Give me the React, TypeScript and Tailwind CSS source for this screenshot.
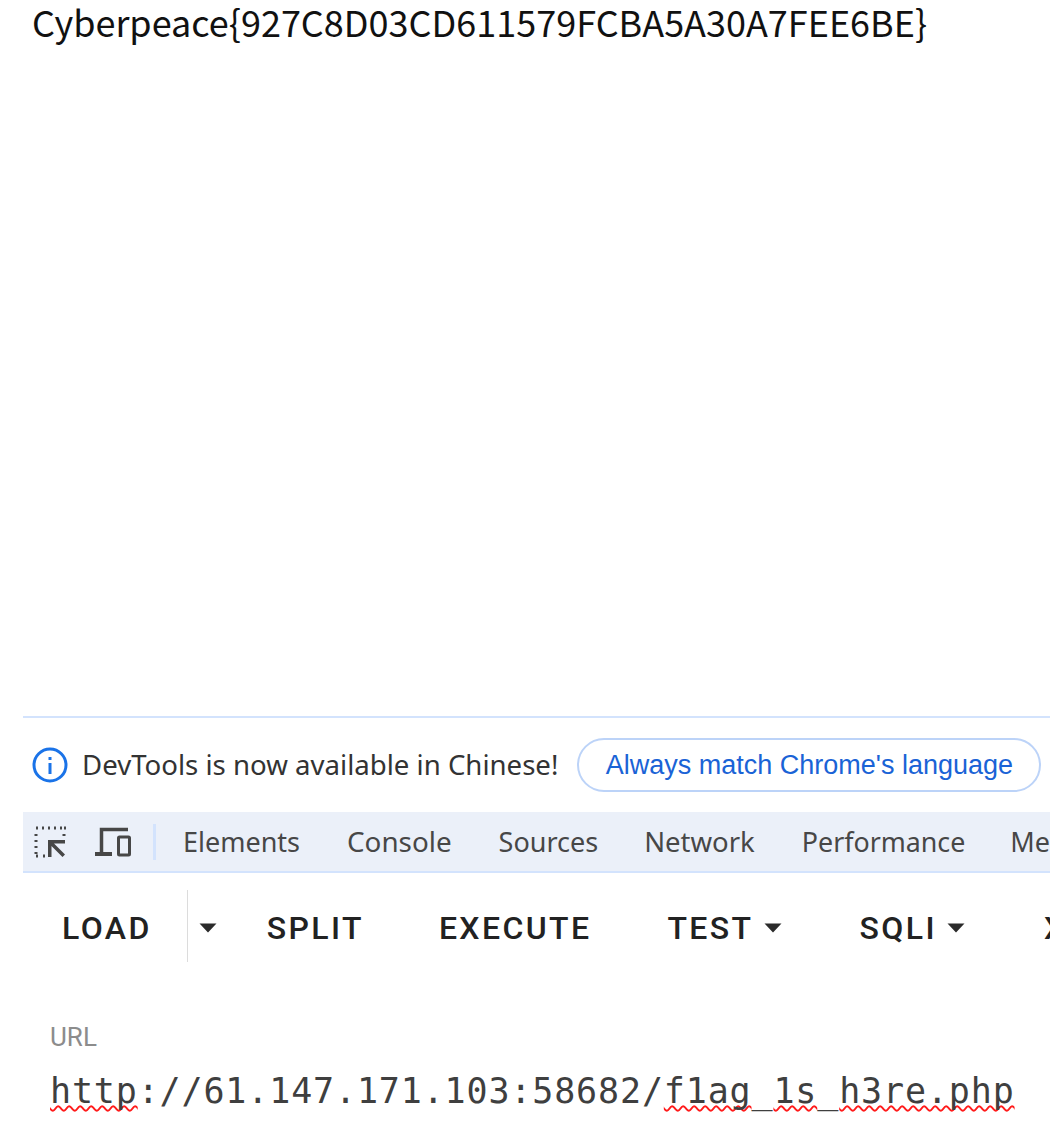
import React from 'react';

const panelTabs = [
  { label: 'Elements', cls: 'text-[27px]' },
  { label: 'Console', cls: 'text-[27.800px]' },
  { label: 'Sources', cls: 'text-[27px]' },
  { label: 'Network', cls: 'text-[27.500px] -ml-px' },
  { label: 'Performance', cls: 'text-[26.800px]' },
  { label: 'Memory', cls: 'text-[27px] -ml-[2px]' },
];

const Caret = () => (
  <svg width="18" height="10" viewBox="0 0 18 10" className="shrink-0">
    <path d="M0.5 0.5 L17.5 0.5 L9 9.5 Z" fill="#2b2b2b" />
  </svg>
);

const Squiggle = ({ children }: { children: React.ReactNode }) => (
  <span className="underline decoration-wavy decoration-[#ff1a1a] decoration-2 underline-offset-[2px] [text-decoration-skip-ink:none]">{children}</span>
);

export default function App() {
  return (
    <div className="w-[1050px] h-[1125px] overflow-hidden bg-white flex flex-col">
      <div className="h-[716px] pl-[32px] shrink-0">
        <p className="text-[36px] leading-[42px] text-[#111] whitespace-nowrap font-['Noto_Sans_CJK_SC','Noto_Sans',sans-serif]">
          Cyberpeace{'{'}927C8D03CD611579FCBA5A30A7FEE6BE{'}'}
        </p>
      </div>

      <div className="ml-[23px] flex flex-col">
        <div className="h-[96px] border-t-2 border-[#d3e3fd] flex items-center pl-[9px] gap-[19px]">
          <div className="flex items-center gap-[14px]">
            <svg width="36" height="36" viewBox="0 0 36 36" className="shrink-0">
              <circle cx="18" cy="18" r="16" fill="none" stroke="#1a73e8" strokeWidth="3" />
              <rect x="16.500" y="16" width="3" height="11" fill="#1a73e8" />
              <rect x="16.500" y="10" width="3" height="3" fill="#1a73e8" />
            </svg>
            <span className="text-[27.600px] text-[#333] whitespace-nowrap font-['Noto_Sans',sans-serif]">DevTools is now available in Chinese!</span>
          </div>
          <button className="h-[54px] w-[464px] shrink-0 rounded-full border-2 border-[#bcd3f8] text-[27px] text-[#1a63d6] font-['Liberation_Sans',sans-serif] whitespace-nowrap">
            Always match Chrome's language
          </button>
        </div>

        <div className="h-[61px] bg-[#ebf0f9] border-b-2 border-[#d3e3fd] flex items-center overflow-hidden pl-[11px]">
          <svg width="34" height="34" viewBox="0 0 34 34" className="shrink-0">
            <path d="M2 3h2M8 3h2M14 3h2M20 3h2M26 3h2M30 3h2M2 9v2M2 15v2M2 21v2M2 27v2M2 31h2M9 31h2M30 9v2" fill="none" stroke="#474747" strokeWidth="3" />
            <path d="M14 32V15h17v3.500H20L31 29.500l-2.500 2.500L17.500 21V32z" fill="#474747" />
          </svg>
          <svg width="36" height="30" viewBox="0 0 36 30" className="ml-[27px] shrink-0">
            <path d="M6.500 27V2.500H33" fill="none" stroke="#474747" strokeWidth="3.500" />
            <rect x="0" y="25" width="17" height="4" fill="#474747" />
            <rect x="23.500" y="10" width="11" height="18" rx="1" fill="none" stroke="#474747" strokeWidth="3" />
          </svg>
          <div className="ml-[22px] h-[36px] w-[3px] bg-[#d3e3fd] shrink-0" />
          <div className="ml-[27px] pt-[1px] flex items-center gap-[47px] font-['Noto_Sans',sans-serif] text-[#474747] whitespace-nowrap">
            {panelTabs.map((tab) => (
              <span key={tab.label} className={tab.cls}>{tab.label}</span>
            ))}
          </div>
        </div>

        <div className="mt-[17px] h-[76px] flex items-center overflow-hidden font-['Roboto',sans-serif] font-medium text-[32px] tracking-[2.400px] text-[#222] whitespace-nowrap pl-[39px]">
          <span>LOAD</span>
          <div className="ml-[35px] h-[72px] w-px bg-[#dcdcdc] shrink-0 self-start" />
          <span className="ml-[11px]"><Caret /></span>
          <span className="ml-[50px]">SPLIT</span>
          <span className="ml-[75px]">EXECUTE</span>
          <span className="ml-[76px]">TEST</span>
          <span className="ml-[10px]"><Caret /></span>
          <span className="ml-[78px]">SQLI</span>
          <span className="ml-[10px]"><Caret /></span>
          <span className="ml-[79px]">XSS</span>
        </div>

        <div className="pl-[27px] mt-[57px]">
          <div className="text-[26px] leading-[28px] text-[#8c8c8c] font-['Roboto',sans-serif]">URL</div>
          <div className="mt-[20px] text-[35px] leading-[40px] tracking-[0.850px] text-[#3f3f3f] whitespace-nowrap font-['DejaVu_Sans_Mono',monospace]">
            <Squiggle>http</Squiggle>://61.147.171.103:58682/<Squiggle>f1ag</Squiggle>_<Squiggle>1s</Squiggle>_<Squiggle>h3re.php</Squiggle>
          </div>
        </div>
      </div>
    </div>
  );
}
